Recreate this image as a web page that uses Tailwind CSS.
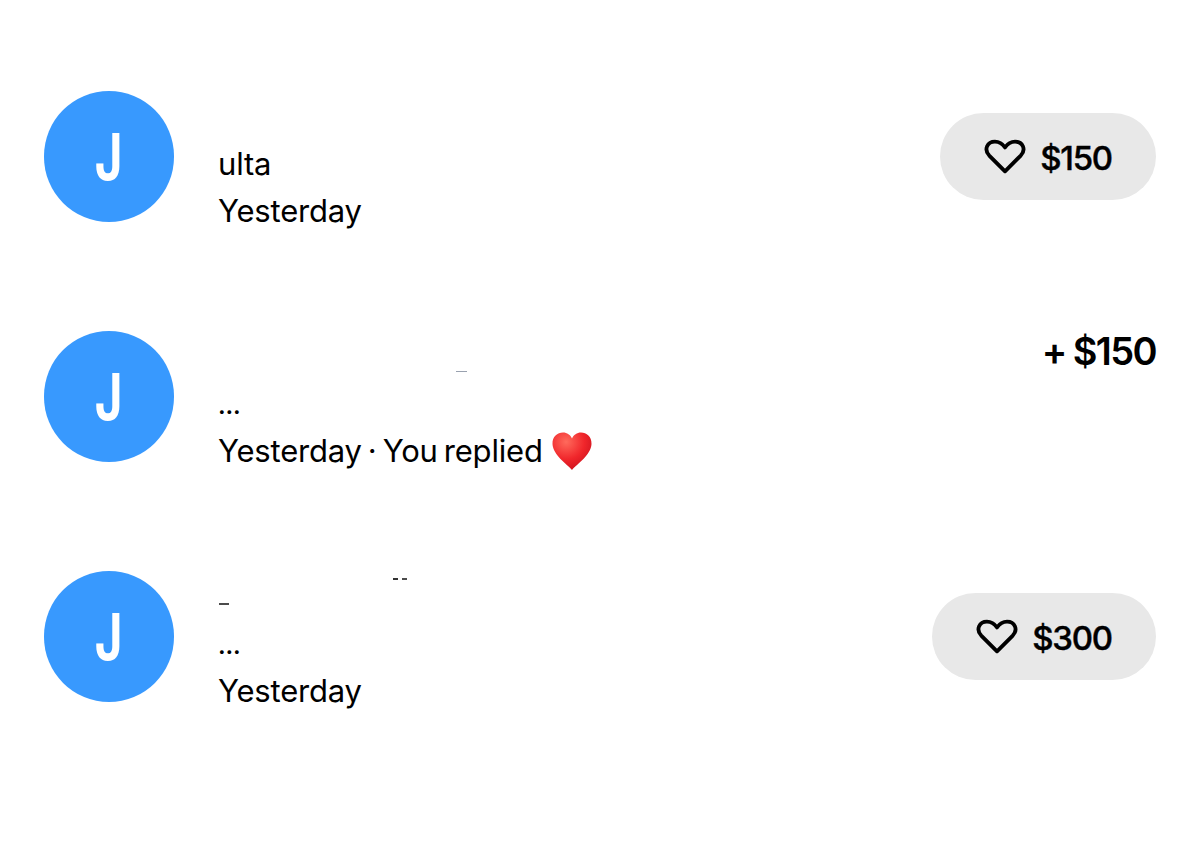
<!DOCTYPE html>
<html>
<head>
<meta charset="utf-8">
<script src="https://cdn.jsdelivr.net/npm/@tailwindcss/browser@4"></script>
</head>
<body class="bg-white">
<main class="relative w-[1200px] h-[850px] overflow-hidden bg-white text-black font-['Inter','Liberation_Sans',sans-serif]">
  <div class="flex flex-col gap-[109px] pt-[91px] pl-[44px] pr-[44px]">

    <div class="flex items-start h-[131px]">
      <div class="w-[130px] h-[131px] shrink-0 rounded-full bg-[#3899fe] flex items-center justify-center text-white text-[64px] font-bold leading-none"><span class="scale-x-[0.74]">J</span></div>
      <div class="ml-[44px] pt-[49px] text-[31px] leading-[47px] tracking-[-0.2px]">
        <p>ulta</p>
        <p>Yesterday</p>
      </div>
      <div class="ml-auto mt-[22px] h-[87px] w-[216px] rounded-full bg-[#e8e8e8] flex items-center justify-center gap-[14px] text-[33px] font-medium tracking-[-1.3px]">
        <svg class="w-[42px] h-[35px]" viewBox="0 0 44 36" fill="none" stroke="black" stroke-width="4" stroke-linejoin="round"><path d="M22 33.5 L5.500 17 C-0.500 10.500 3.500 2.500 11.500 2.500 C16 2.500 19.500 5 22 8.500 C24.500 5 28 2.500 32.500 2.500 C40.500 2.500 44.500 10.500 38.500 17 Z"/></svg>
        <span class="pt-[4px] [-webkit-text-stroke:0.4px_black]">$150</span>
      </div>
    </div>

    <div class="flex items-start h-[131px]">
      <div class="w-[130px] h-[131px] shrink-0 rounded-full bg-[#3899fe] flex items-center justify-center text-white text-[64px] font-bold leading-none"><span class="scale-x-[0.74]">J</span></div>
      <div class="relative ml-[44px] pt-[49px] text-[31px] leading-[47px] tracking-[-0.2px]">
        <span class="absolute left-[238px] top-[40px] w-[11px] h-[1px] bg-gray-400"></span>
        <p class="relative top-[2px] text-[24px] font-semibold">...</p>
        <p class="flex items-center [word-spacing:-2.4px]">Yesterday · You replied
          <svg class="ml-[9px] w-[40px] h-[38px]" viewBox="0 0 40 38">
            <defs>
              <radialGradient id="h1" cx="0.35" cy="0.25" r="0.85"><stop offset="0" stop-color="#ff6a5c"/><stop offset="0.55" stop-color="#f0262b"/><stop offset="1" stop-color="#c70f1c"/></radialGradient>
            </defs>
            <path fill="url(#h1)" d="M20 38 C15 32 1 23 0.500 12 C0.200 4.500 5.500 0.500 11 0.500 C15 0.500 18.500 3 20 6.500 C21.500 3 25 0.500 29 0.500 C34.500 0.500 39.800 4.500 39.500 12 C39 23 25 32 20 38 Z"/>
          </svg>
        </p>
      </div>
      <div class="ml-auto text-[38px] leading-[40px] font-semibold tracking-[-1.6px] [word-spacing:-1px]">+ $150</div>
    </div>

    <div class="flex items-start h-[131px]">
      <div class="w-[130px] h-[131px] shrink-0 rounded-full bg-[#3899fe] flex items-center justify-center text-white text-[64px] font-bold leading-none"><span class="scale-x-[0.74]">J</span></div>
      <div class="relative ml-[44px] pt-[49px] text-[31px] leading-[47px] tracking-[-0.2px]">
        <span class="absolute left-[175px] top-[7px] w-[5px] h-[2px] bg-black/80"></span>
        <span class="absolute left-[184px] top-[7px] w-[5px] h-[2px] bg-black/70"></span>
        <span class="absolute left-[1px] top-[32px] w-[10px] h-[2px] bg-black/70"></span>
        <p class="relative top-[2px] text-[24px] font-semibold">...</p>
        <p>Yesterday</p>
      </div>
      <div class="ml-auto mt-[22px] h-[87px] w-[224px] rounded-full bg-[#e8e8e8] flex items-center justify-center gap-[14px] text-[33px] font-medium tracking-[-1.3px]">
        <svg class="w-[42px] h-[35px]" viewBox="0 0 44 36" fill="none" stroke="black" stroke-width="4" stroke-linejoin="round"><path d="M22 33.5 L5.500 17 C-0.500 10.500 3.500 2.500 11.500 2.500 C16 2.500 19.500 5 22 8.500 C24.500 5 28 2.500 32.500 2.500 C40.500 2.500 44.500 10.500 38.500 17 Z"/></svg>
        <span class="pt-[4px] [-webkit-text-stroke:0.4px_black]">$300</span>
      </div>
    </div>

  </div>
</main>
</body>
</html>
